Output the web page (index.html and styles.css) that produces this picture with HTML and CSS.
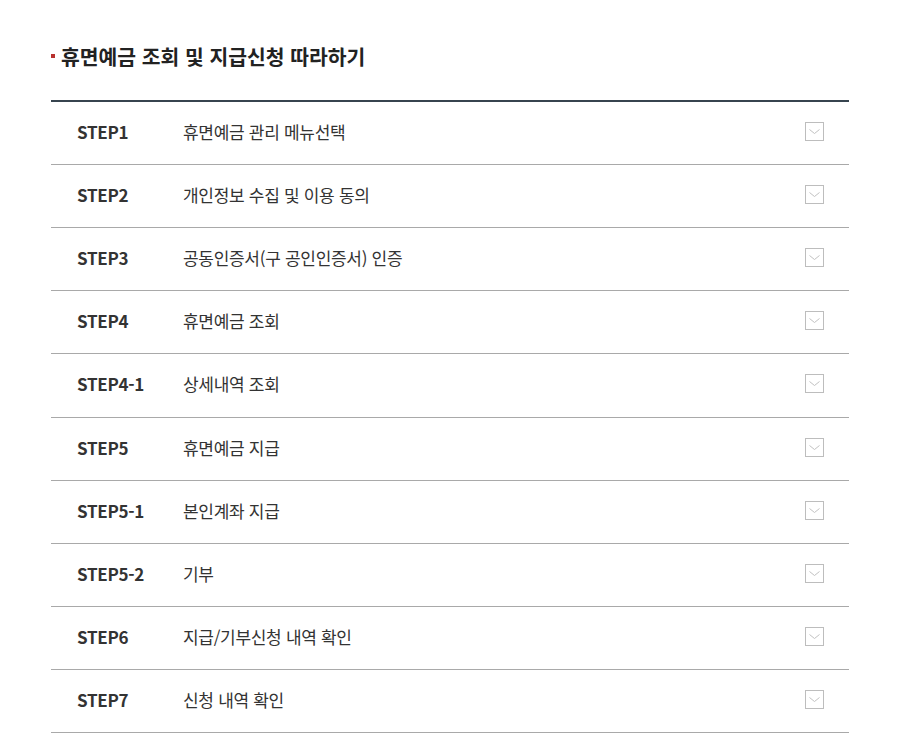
FILE: index.html
```html
<!DOCTYPE html>
<html lang="ko">
<head>
<meta charset="utf-8">
<title>휴면예금 조회 및 지급신청 따라하기</title>
<link rel="stylesheet" href="styles.css">
</head>
<body>
<div class="wrap">
  <h2 class="title"><span class="bullet"></span>휴면예금 조회 및 지급신청 따라하기</h2>
  <ul class="steps">
    <li class="step"><span class="num">STEP1</span><span class="label">휴면예금 관리 메뉴선택</span><span class="toggle"><svg viewBox="0 0 19 19" width="19" height="19"><rect x="0.5" y="0.5" width="18" height="18" fill="#fff" stroke="#bdbdbd"/><path d="M4.5 7.5 L9.5 11.5 L14.5 7.5" fill="none" stroke="#c2c2c2" stroke-width="1"/></svg></span></li>
    <li class="step"><span class="num">STEP2</span><span class="label">개인정보 수집 및 이용 동의</span><span class="toggle"><svg viewBox="0 0 19 19" width="19" height="19"><rect x="0.5" y="0.5" width="18" height="18" fill="#fff" stroke="#bdbdbd"/><path d="M4.5 7.5 L9.5 11.5 L14.5 7.5" fill="none" stroke="#c2c2c2" stroke-width="1"/></svg></span></li>
    <li class="step"><span class="num">STEP3</span><span class="label">공동인증서(구 공인인증서) 인증</span><span class="toggle"><svg viewBox="0 0 19 19" width="19" height="19"><rect x="0.5" y="0.5" width="18" height="18" fill="#fff" stroke="#bdbdbd"/><path d="M4.5 7.5 L9.5 11.5 L14.5 7.5" fill="none" stroke="#c2c2c2" stroke-width="1"/></svg></span></li>
    <li class="step"><span class="num">STEP4</span><span class="label">휴면예금 조회</span><span class="toggle"><svg viewBox="0 0 19 19" width="19" height="19"><rect x="0.5" y="0.5" width="18" height="18" fill="#fff" stroke="#bdbdbd"/><path d="M4.5 7.5 L9.5 11.5 L14.5 7.5" fill="none" stroke="#c2c2c2" stroke-width="1"/></svg></span></li>
    <li class="step"><span class="num">STEP4-1</span><span class="label">상세내역 조회</span><span class="toggle"><svg viewBox="0 0 19 19" width="19" height="19"><rect x="0.5" y="0.5" width="18" height="18" fill="#fff" stroke="#bdbdbd"/><path d="M4.5 7.5 L9.5 11.5 L14.5 7.5" fill="none" stroke="#c2c2c2" stroke-width="1"/></svg></span></li>
    <li class="step"><span class="num">STEP5</span><span class="label">휴면예금 지급</span><span class="toggle"><svg viewBox="0 0 19 19" width="19" height="19"><rect x="0.5" y="0.5" width="18" height="18" fill="#fff" stroke="#bdbdbd"/><path d="M4.5 7.5 L9.5 11.5 L14.5 7.5" fill="none" stroke="#c2c2c2" stroke-width="1"/></svg></span></li>
    <li class="step"><span class="num">STEP5-1</span><span class="label">본인계좌 지급</span><span class="toggle"><svg viewBox="0 0 19 19" width="19" height="19"><rect x="0.5" y="0.5" width="18" height="18" fill="#fff" stroke="#bdbdbd"/><path d="M4.5 7.5 L9.5 11.5 L14.5 7.5" fill="none" stroke="#c2c2c2" stroke-width="1"/></svg></span></li>
    <li class="step"><span class="num">STEP5-2</span><span class="label">기부</span><span class="toggle"><svg viewBox="0 0 19 19" width="19" height="19"><rect x="0.5" y="0.5" width="18" height="18" fill="#fff" stroke="#bdbdbd"/><path d="M4.5 7.5 L9.5 11.5 L14.5 7.5" fill="none" stroke="#c2c2c2" stroke-width="1"/></svg></span></li>
    <li class="step"><span class="num">STEP6</span><span class="label">지급/기부신청 내역 확인</span><span class="toggle"><svg viewBox="0 0 19 19" width="19" height="19"><rect x="0.5" y="0.5" width="18" height="18" fill="#fff" stroke="#bdbdbd"/><path d="M4.5 7.5 L9.5 11.5 L14.5 7.5" fill="none" stroke="#c2c2c2" stroke-width="1"/></svg></span></li>
    <li class="step"><span class="num">STEP7</span><span class="label">신청 내역 확인</span><span class="toggle"><svg viewBox="0 0 19 19" width="19" height="19"><rect x="0.5" y="0.5" width="18" height="18" fill="#fff" stroke="#bdbdbd"/><path d="M4.5 7.5 L9.5 11.5 L14.5 7.5" fill="none" stroke="#c2c2c2" stroke-width="1"/></svg></span></li>
  </ul>
</div>
</body>
</html>
```

FILE: styles.css
```css
html, body {
  margin: 0;
  padding: 0;
  background: #fff;
}
body {
  font-family: "Noto Sans CJK KR", "Noto Sans", sans-serif;
  color: #333;
}
.wrap {
  width: 798px;
  margin-left: 51px;
  padding-top: 41px;
}
.title {
  display: flex;
  align-items: center;
  margin: 0 0 29px;
  height: 30px;
  line-height: 30px;
  font-size: 20.4px;
  font-weight: 700;
  color: #222;
  letter-spacing: 0;
}
.bullet {
  width: 4px;
  height: 4px;
  background: #b8312f;
  margin-right: 6px;
  flex: none;
}
.steps {
  list-style: none;
  margin: 0;
  padding: 0;
  border-top: 2px solid #37444f;
}
.step {
  box-sizing: border-box;
  display: flex;
  align-items: center;
  height: 63.11px;
  border-bottom: 1px solid #a9a9a9;
  padding: 0 25px 3px 26px;
}
.num {
  width: 106px;
  flex: none;
  font-size: 17px;
  font-weight: 700;
  color: #333;
  letter-spacing: -0.3px;
}
.label {
  flex: 1;
  font-size: 17px;
  color: #333;
  letter-spacing: -0.3px;
}
.toggle {
  width: 19px;
  height: 19px;
  flex: none;
  display: block;
}
.toggle svg {
  display: block;
}
```
